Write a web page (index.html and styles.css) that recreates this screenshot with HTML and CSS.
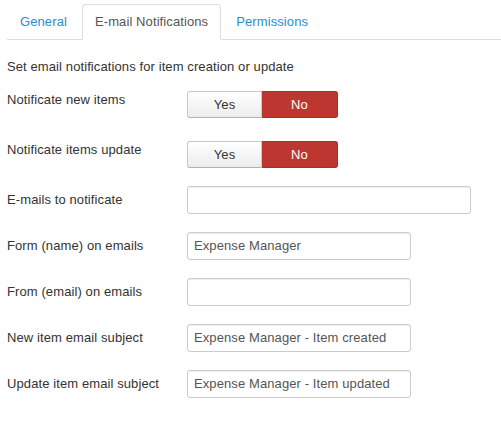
FILE: index.html
```html
<!DOCTYPE html>
<html>
<head>
<meta charset="utf-8">
<link rel="stylesheet" href="styles.css">
</head>
<body>
<div class="page">
  <ul class="tabs">
    <li class="tab"><a>General</a></li>
    <li class="tab active"><a>E-mail Notifications</a></li>
    <li class="tab"><a>Permissions</a></li>
  </ul>
  <p class="desc">Set email notifications for item creation or update</p>
  <div class="group group-first">
    <div class="label label-radio">Notificate new items</div>
    <div class="controls">
      <div class="toggle"><span class="btn">Yes</span><span class="btn btn-no">No</span></div>
    </div>
  </div>
  <div class="group">
    <div class="label label-radio">Notificate items update</div>
    <div class="controls">
      <div class="toggle"><span class="btn">Yes</span><span class="btn btn-no">No</span></div>
    </div>
  </div>
  <div class="group">
    <div class="label">E-mails to notificate</div>
    <div class="controls"><div class="input input-wide"></div></div>
  </div>
  <div class="group">
    <div class="label">Form (name) on emails</div>
    <div class="controls"><div class="input">Expense Manager</div></div>
  </div>
  <div class="group">
    <div class="label">From (email) on emails</div>
    <div class="controls"><div class="input"></div></div>
  </div>
  <div class="group">
    <div class="label">New item email subject</div>
    <div class="controls"><div class="input">Expense Manager - Item created</div></div>
  </div>
  <div class="group">
    <div class="label">Update item email subject</div>
    <div class="controls"><div class="input">Expense Manager - Item updated</div></div>
  </div>
</div>
</body>
</html>
```

FILE: styles.css
```css
html, body {
  margin: 0;
  padding: 0;
  background: #fff;
}
body {
  font-family: "Liberation Sans", Arial, sans-serif;
  font-size: 13px;
  line-height: 18px;
  color: #333;
  letter-spacing: 0.1px;
}
.page {
  padding: 4px 0 0 7px;
}
.tabs {
  list-style: none;
  margin: 0;
  padding: 0;
  display: flex;
  border-bottom: 1px solid #ddd;
}
.tab {
  margin-bottom: -1px;
  margin-right: 2px;
}
.tab a {
  display: block;
  padding: 8px 12px;
  line-height: 18px;
  color: #2d8ccb;
  border: 1px solid transparent;
  border-radius: 4px 4px 0 0;
}
.tab.active a {
  color: #555;
  background: #fff;
  border-color: #ddd #ddd transparent;
}
.desc {
  margin: 18px 0 15px;
}
.group {
  display: flex;
  margin-bottom: 18px;
}
.group-first {
  margin-bottom: 23px;
}
.label {
  width: 180px;
  flex: none;
  padding-top: 5px;
}
.label-radio {
  padding-top: 0;
}
.controls {
  flex: 1;
}
.toggle {
  display: flex;
  width: 151px;
}
.btn {
  box-sizing: border-box;
  width: 75px;
  height: 27px;
  line-height: 25px;
  text-align: center;
  font-size: 13px;
  color: #333;
  border: 1px solid #c8c8c8;
  border-bottom-color: #b3b3b3;
  background: linear-gradient(#ffffff, #ececec);
  border-radius: 3px 0 0 3px;
}
.btn-no {
  width: 76px;
  color: #fff;
  background: #bd362f;
  border-color: #a9302a;
  border-radius: 0 3px 3px 0;
  border-left: none;
}
.input {
  box-sizing: border-box;
  width: 224px;
  height: 28px;
  padding: 4px 6px;
  line-height: 18px;
  color: #555;
  border: 1px solid #ccc;
  border-radius: 3px;
  background: #fff;
  box-shadow: inset 0 1px 1px rgba(0, 0, 0, 0.075);
}
.input-wide {
  width: 284px;
}
```
